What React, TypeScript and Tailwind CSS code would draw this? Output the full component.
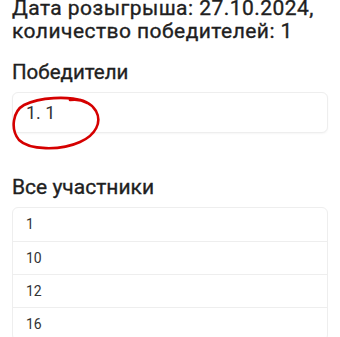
const participants = ["1", "10", "12", "16"];

export default function App() {
  return (
    <div
      className="min-h-[337px] bg-white px-3 text-[#1f1f1f] overflow-hidden"
      style={{ fontFamily: "Roboto, 'Noto Sans', sans-serif" }}
    >
      <h1 className="-mt-[3px] text-[21px] leading-[23px] font-normal tracking-[0.45px] [-webkit-text-stroke:0.35px_#1f1f1f] whitespace-nowrap">
        Дата розыгрыша: 27.10.2024,
        <br />
        количество победителей: 1
      </h1>

      <h2 className="mt-[18px] text-[20.5px] leading-[23px] font-normal [-webkit-text-stroke:0.35px_#1f1f1f]">
        Победители
      </h2>

      <div className="relative mt-2">
        <div className="h-[41px] flex items-center px-[13px] rounded-md border border-[#eeeeee] bg-white shadow-[0_1px_2px_rgba(0,0,0,0.04)]">
          <span className="text-[18px] text-[#333]">1. 1</span>
        </div>
        {/* hand-drawn annotation */}
        <svg
          className="absolute left-[-2px] top-[3px] w-[92px] h-[58px] max-w-none pointer-events-none"
          viewBox="0 0 92 58"
          fill="none"
        >
          <path
            d="M60 5 C66 4 72 5 77 8 M73 6 C58 1 30 2 14 10 C3 16 0 34 9 45 C19 55 50 56 70 47 C86 40 92 27 86 16 C81 8 72 4 62 4"
            stroke="#d50000"
            strokeWidth="2.6"
            strokeLinecap="round"
            strokeLinejoin="round"
          />
        </svg>
      </div>

      <h2 className="mt-[43px] text-[21px] leading-[23px] font-normal [-webkit-text-stroke:0.35px_#1f1f1f]">
        Все участники
      </h2>

      <div className="mt-2 rounded-md border border-[#eeeeee] bg-white">
        {participants.map((p, i) => (
          <div
            key={p}
            className={`h-[33px] flex items-center px-[13px] text-[14px] text-[#333] ${
              i > 0 ? "border-t border-[#eeeeee]" : ""
            }`}
          >
            {p}
          </div>
        ))}
      </div>
    </div>
  );
}
